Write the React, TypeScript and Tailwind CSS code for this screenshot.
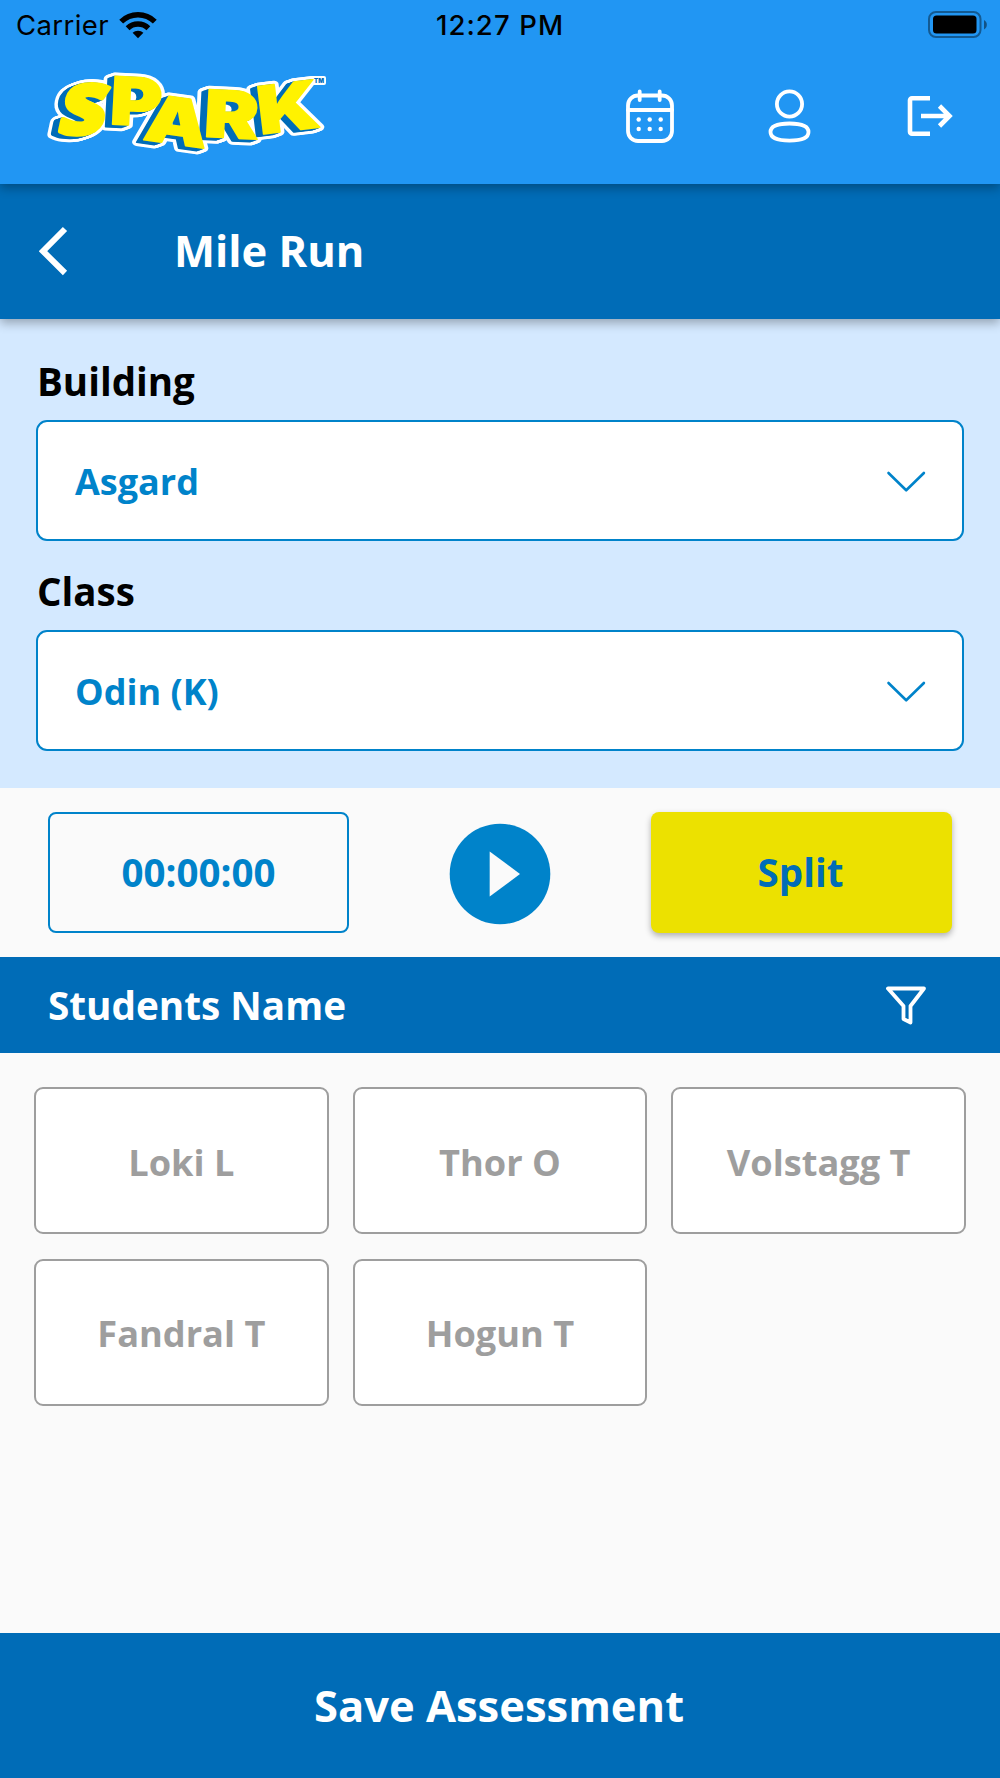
import React from 'react';

const LOGO_LETTERS = [
  { char: 'S', width: 45, size: 69, stroke: 4.5, font: 'Open Sans', transform: 'translate(56.5 133.5) rotate(1) skewX(-11)' },
  { char: 'P', width: 52, size: 66, stroke: 1.5, font: 'Inter', transform: 'translate(109 124) rotate(3)' },
  { char: 'A', width: 64, size: 64, stroke: 1.5, font: 'Inter', transform: 'translate(142 139.5) rotate(8)' },
  { char: 'R', width: 55, size: 65, stroke: 1.5, font: 'Inter', transform: 'translate(203 136.5) rotate(3)' },
  { char: 'K', width: 62, size: 66, stroke: 1.5, font: 'Inter', transform: 'translate(260 134.5) rotate(-7)' },
];

// steps of the extruded edge, from the face of the letter to its far side
const LOGO_DEPTH = [1, 2, 3, 4, 5, 6, 7];

const LogoWord = ({ depth = 0, outline = 0 }: { depth?: number; outline?: number }) => (
  <g transform={`translate(${-depth} ${depth * 0.35})`}>
    {LOGO_LETTERS.map((l) => (
      <text key={l.char} transform={l.transform} fontFamily={l.font} fontSize={l.size} strokeWidth={l.stroke + outline} textLength={l.width} lengthAdjust="spacingAndGlyphs">
        {l.char}
      </text>
    ))}
  </g>
);

const SparkLogo = () => (
  <svg width="300" height="100" viewBox="40 66 300 100" className="overflow-visible font-['Inter',sans-serif] font-black" strokeLinejoin="round">
    <g fill="#fff" stroke="#fff">
      <LogoWord outline={6} />
      {LOGO_DEPTH.map((d) => (
        <LogoWord key={d} depth={d} outline={6} />
      ))}
    </g>
    <rect x="311" y="76" width="15" height="9" rx="2" fill="#fff" />
    <g fill="#006cb7" stroke="#006cb7">
      {LOGO_DEPTH.map((d) => (
        <LogoWord key={d} depth={d} />
      ))}
    </g>
    <g fill="#fff200" stroke="#fff200">
      <LogoWord />
    </g>
    <text x="314" y="83" fontSize="6" textLength="10" fill="#006cb7">TM</text>
  </svg>
);

const WifiIcon = () => (
  <svg width="38" height="28" viewBox="0 0 38 28" fill="none" stroke="#000" strokeWidth="5.5">
    <path d="M2.2 10.6a24 24 0 0 1 33.6 0" />
    <path d="M8.6 17.3a15 15 0 0 1 20.8 0" />
    <path d="M19 27.2l-5.4-5.4a7.8 7.8 0 0 1 10.8 0z" fill="#000" stroke="none" />
  </svg>
);

const BatteryIcon = () => (
  <svg width="60" height="28" viewBox="0 0 60 28">
    <rect x="1" y="1" width="51.5" height="25" rx="7" fill="none" stroke="#000" strokeOpacity="0.4" strokeWidth="2" />
    <rect x="5" y="4.5" width="43.5" height="18" rx="3.5" />
    <path d="M56 9c3.8 2 3.8 7.5 0 9.5z" fillOpacity="0.45" />
  </svg>
);

const CalendarIcon = () => (
  <svg width="50" height="56" viewBox="0 0 50 56" fill="none" stroke="#fff" strokeWidth="3.8" strokeLinecap="round">
    <rect x="3" y="7.5" width="44" height="45.5" rx="10" />
    <path d="M3 22h44M14.7 3.5v8.5M34.7 3.5v8.5" />
    <g fill="#fff" stroke="none">
      {[13.7, 24.7, 35.7].map((x) => (
        <React.Fragment key={x}>
          <circle cx={x} cy="31.5" r="2.2" />
          <circle cx={x} cy="41" r="2.2" />
        </React.Fragment>
      ))}
    </g>
  </svg>
);

const UserIcon = () => (
  <svg width="44" height="56" viewBox="0 0 44 56" fill="none" stroke="#fff" strokeWidth="3.8">
    <circle cx="21.5" cy="16" r="12.6" />
    <path d="M21.5 35.5c13 0 19 3.5 19 8.6s-6 8.6-19 8.6-19-3.5-19-8.6 6-8.6 19-8.6z" />
  </svg>
);

const LogoutIcon = () => (
  <svg width="46" height="42" viewBox="0 0 46 42" fill="none" stroke="#fff" strokeWidth="4.6">
    <path d="M23 3.3H5a2 2 0 0 0-2 2v31.4a2 2 0 0 0 2 2h18" />
    <path d="M14 21h28.5M32.5 11l10 10-10 10" />
  </svg>
);

const BackIcon = () => (
  <svg width="30" height="50" viewBox="0 0 30 50" fill="none" stroke="#fff" strokeWidth="6">
    <path d="M26 3L4 25.2l22 21.8" />
  </svg>
);

const ChevronIcon = () => (
  <svg width="40" height="24" viewBox="0 0 40 24" fill="none" stroke="#0083ca" strokeWidth="2.6" strokeLinecap="round" strokeLinejoin="round">
    <path d="M2.5 3l17.7 17.3L37.9 3" />
  </svg>
);

const PlayIcon = () => (
  <svg width="102" height="102" viewBox="0 0 102 102">
    <circle cx="51" cy="51" r="50.3" fill="#0083ca" />
    <path d="M40.7 28.5v45L71 51z" fill="#fafafa" />
  </svg>
);

const FilterIcon = () => (
  <svg width="42" height="40" viewBox="0 0 42 40" fill="none" stroke="#fff" strokeWidth="3.8" strokeLinejoin="round">
    <path d="M3 3.5h36L25.5 21v16.5L18.500 34V21z" />
  </svg>
);

interface SelectFieldProps {
  label: string;
  value: string;
}

const SelectField = ({ label, value }: SelectFieldProps) => (
  <div className="flex flex-col">
    <label className="flex h-[68px] items-center pb-[9px] pl-px text-[38.5px] leading-none font-bold text-black">{label}</label>
    <button className="flex h-[121px] w-full items-center justify-between rounded-[11px] border-2 border-[#0083ca] bg-white pt-0.5 pr-[36px] pl-[37px] text-[36px] font-bold text-[#0083ca]">
      <span className="pt-px">{value}</span>
      <ChevronIcon />
    </button>
  </div>
);

const students = ['Loki L', 'Thor O', 'Volstagg T', 'Fandral T', 'Hogun T'];

export default function App() {
  return (
    <div className="flex h-[1778px] w-[1000px] flex-col overflow-hidden bg-[#fafafa] font-['Open_Sans',sans-serif]">
      <header className="relative z-20 h-[183.5px] shrink-0 bg-[#2196f3] shadow-[0_4px_10px_rgba(0,0,0,0.3)]">
        <div className="grid h-[50px] grid-cols-3 items-center pr-[12px] pl-4 font-['Inter',sans-serif] text-[27.5px] text-black">
          <div className="flex items-center gap-[10px]">
            <span className="pt-0.5 tracking-[0.4px]">Carrier</span>
            <WifiIcon />
          </div>
          <span className="pt-px pr-[4px] text-center font-medium tracking-[1.1px]">12:27 PM</span>
          <div className="flex justify-end">
            <BatteryIcon />
          </div>
        </div>
        <div className="flex items-center pt-[12px] pr-[47px] pl-[40px]">
          <SparkLogo />
          <div className="ml-auto flex h-[108px] items-center">
            <CalendarIcon />
            <div className="ml-[93px]"><UserIcon /></div>
            <div className="ml-[95px]"><LogoutIcon /></div>
          </div>
        </div>
      </header>

      <div className="relative z-10 flex h-[135px] shrink-0 items-center bg-[#006cb7] pl-[39px] text-white shadow-[0_4px_10px_rgba(0,0,0,0.3)]">
        <BackIcon />
        <h1 className="ml-[105px] text-[43.5px] font-bold">Mile Run</h1>
      </div>

      <section className="flex h-[469px] shrink-0 flex-col gap-[21px] bg-[#d4e9ff] px-[36px] pt-[33.5px]">
        <SelectField label="Building" value="Asgard" />
        <SelectField label="Class" value="Odin (K)" />
      </section>

      <section className="flex h-[169px] shrink-0 items-center justify-between px-[48px]">
        <div className="flex h-[121px] w-[301px] items-center justify-center rounded-lg border-2 border-[#0083ca] pt-0.5 text-[38.5px] font-bold text-[#0083ca]">00:00:00</div>
        <div className="pt-1"><PlayIcon /></div>
        <button className="h-[121px] w-[301px] rounded-lg bg-[#ece100] pt-0.5 pr-0.5 text-[38.5px] font-bold text-[#006cb7] shadow-[0_3px_6px_rgba(0,0,0,0.3)]">Split</button>
      </section>

      <div className="flex h-[96.5px] shrink-0 items-center justify-between bg-[#006cb7] pr-[73px] pl-[48px] text-white">
        <h2 className="text-[38.7px] font-bold">Students Name</h2>
        <div className="pt-px"><FilterIcon /></div>
      </div>

      <main className="grid flex-1 grid-cols-3 content-start gap-x-6 gap-y-[24.5px] px-[34px] pt-[34px]">
        {students.map((name) => (
          <button key={name} className="h-[147px] rounded-[9px] border-2 border-[#9e9e9e] bg-white pt-[3px] text-[36.2px] font-bold text-[#9e9e9e]">
            {name}
          </button>
        ))}
      </main>

      <button className="h-[145px] shrink-0 bg-[#006cb7] pr-0.5 text-[43.5px] font-bold text-white">Save Assessment</button>
    </div>
  );
}
